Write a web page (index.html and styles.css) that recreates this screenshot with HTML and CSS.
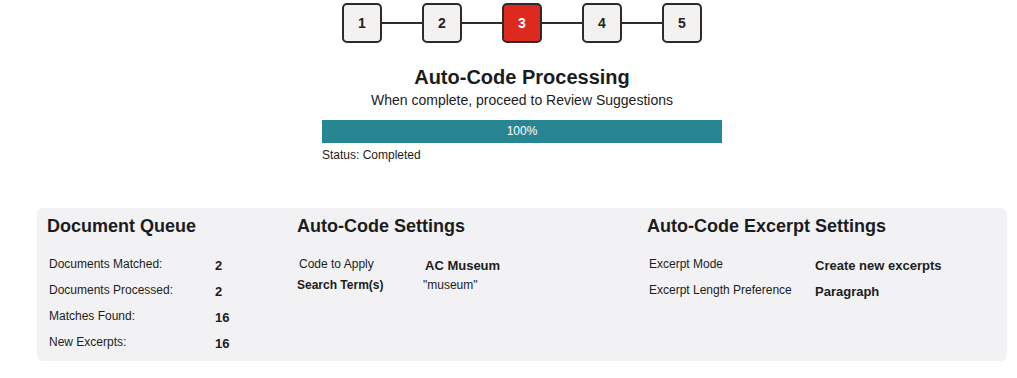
FILE: index.html
```html
<!DOCTYPE html>
<html>
<head>
<meta charset="utf-8">
<link rel="stylesheet" href="styles.css">
</head>
<body>
<div class="wrap">
  <div class="stepper">
    <div class="step">1</div><div class="link"></div>
    <div class="step">2</div><div class="link"></div>
    <div class="step active">3</div><div class="link"></div>
    <div class="step">4</div><div class="link"></div>
    <div class="step">5</div>
  </div>
  <div class="processing">
    <h1 class="title">Auto-Code Processing</h1>
    <p class="subtitle">When complete, proceed to Review Suggestions</p>
    <div class="progress"><div class="bar" style="width:100%">100%</div></div>
    <div class="status">Status: Completed</div>
  </div>
  <div class="panel">
    <div class="col col-queue">
      <h2 class="col-title">Document Queue</h2>
      <div class="rows">
        <div class="row"><span class="label">Documents Matched:</span><span class="value">2</span></div>
        <div class="row"><span class="label">Documents Processed:</span><span class="value">2</span></div>
        <div class="row"><span class="label">Matches Found:</span><span class="value">16</span></div>
        <div class="row"><span class="label">New Excerpts:</span><span class="value">16</span></div>
      </div>
    </div>
    <div class="col col-settings">
      <h2 class="col-title">Auto-Code Settings</h2>
      <div class="rows">
        <div class="row"><span class="label">Code to Apply</span><span class="value">AC Museum</span></div>
        <div class="row"><span class="label strong">Search Term(s)</span><span class="plain">"museum"</span></div>
      </div>
    </div>
    <div class="col col-excerpt">
      <h2 class="col-title">Auto-Code Excerpt Settings</h2>
      <div class="rows">
        <div class="row"><span class="label">Excerpt Mode</span><span class="value">Create new excerpts</span></div>
        <div class="row"><span class="label">Excerpt Length Preference</span><span class="value">Paragraph</span></div>
      </div>
    </div>
  </div>
</div>
</body>
</html>
```
FILE: styles.css
```css
* { box-sizing: border-box; }
body {
  margin: 0;
  font-family: "Liberation Sans", Arial, sans-serif;
  color: #1c1c1c;
  background: #fff;
}
.wrap {
  margin-left: 37px;
  width: 970px;
}
.stepper {
  display: flex;
  justify-content: center;
  align-items: center;
  padding-top: 3px;
}
.step {
  width: 40px;
  height: 40px;
  border: 2px solid #2b2b2b;
  border-radius: 5px;
  background: #f3f2f0;
  display: flex;
  align-items: center;
  justify-content: center;
  font-weight: bold;
  font-size: 14px;
  color: #222;
}
.step.active {
  background: #de2a1e;
  color: #fff;
}
.link {
  width: 40px;
  height: 2px;
  background: #2b2b2b;
}
.processing {
  width: 400px;
  margin: 0 auto;
}
.title {
  margin: 23px 0 0;
  font-size: 20px;
  font-weight: bold;
  text-align: center;
  line-height: 23px;
}
.subtitle {
  margin: 3px 0 0;
  font-size: 14px;
  text-align: center;
  line-height: 17px;
}
.progress {
  margin-top: 11px;
  height: 23px;
  background: #e5e5e5;
}
.bar {
  height: 23px;
  background: #288692;
  color: #fff;
  font-size: 12px;
  line-height: 23px;
  text-align: center;
}
.status {
  margin-top: 5px;
  font-size: 12px;
  line-height: 14px;
}
.panel {
  margin-top: 46px;
  background: #f2f2f4;
  border-radius: 6px;
  height: 153px;
  display: flex;
  padding: 7px 10px 0;
}
.col-queue { width: 250px; }
.col-settings { width: 350px; }
.col-excerpt { width: 350px; }
.col-title {
  margin: 0;
  font-size: 18px;
  font-weight: bold;
  line-height: 22px;
}
.rows {
  margin-top: 20px;
  display: flex;
  flex-direction: column;
  gap: 11px;
}
.row {
  display: flex;
  align-items: flex-start;
  height: 15px;
}
.label {
  width: 168px;
  padding-left: 2px;
  font-size: 12px;
  line-height: 14px;
}
.value {
  font-size: 13px;
  font-weight: bold;
  line-height: 14px;
  margin-top: 2px;
}
.col-settings .rows { gap: 6px; }
.col-settings .label { width: 128px; }
.col-settings .label.strong {
  font-weight: bold;
  padding-left: 0;
  width: 126px;
}
.plain {
  font-size: 12px;
  line-height: 14px;
}
```
